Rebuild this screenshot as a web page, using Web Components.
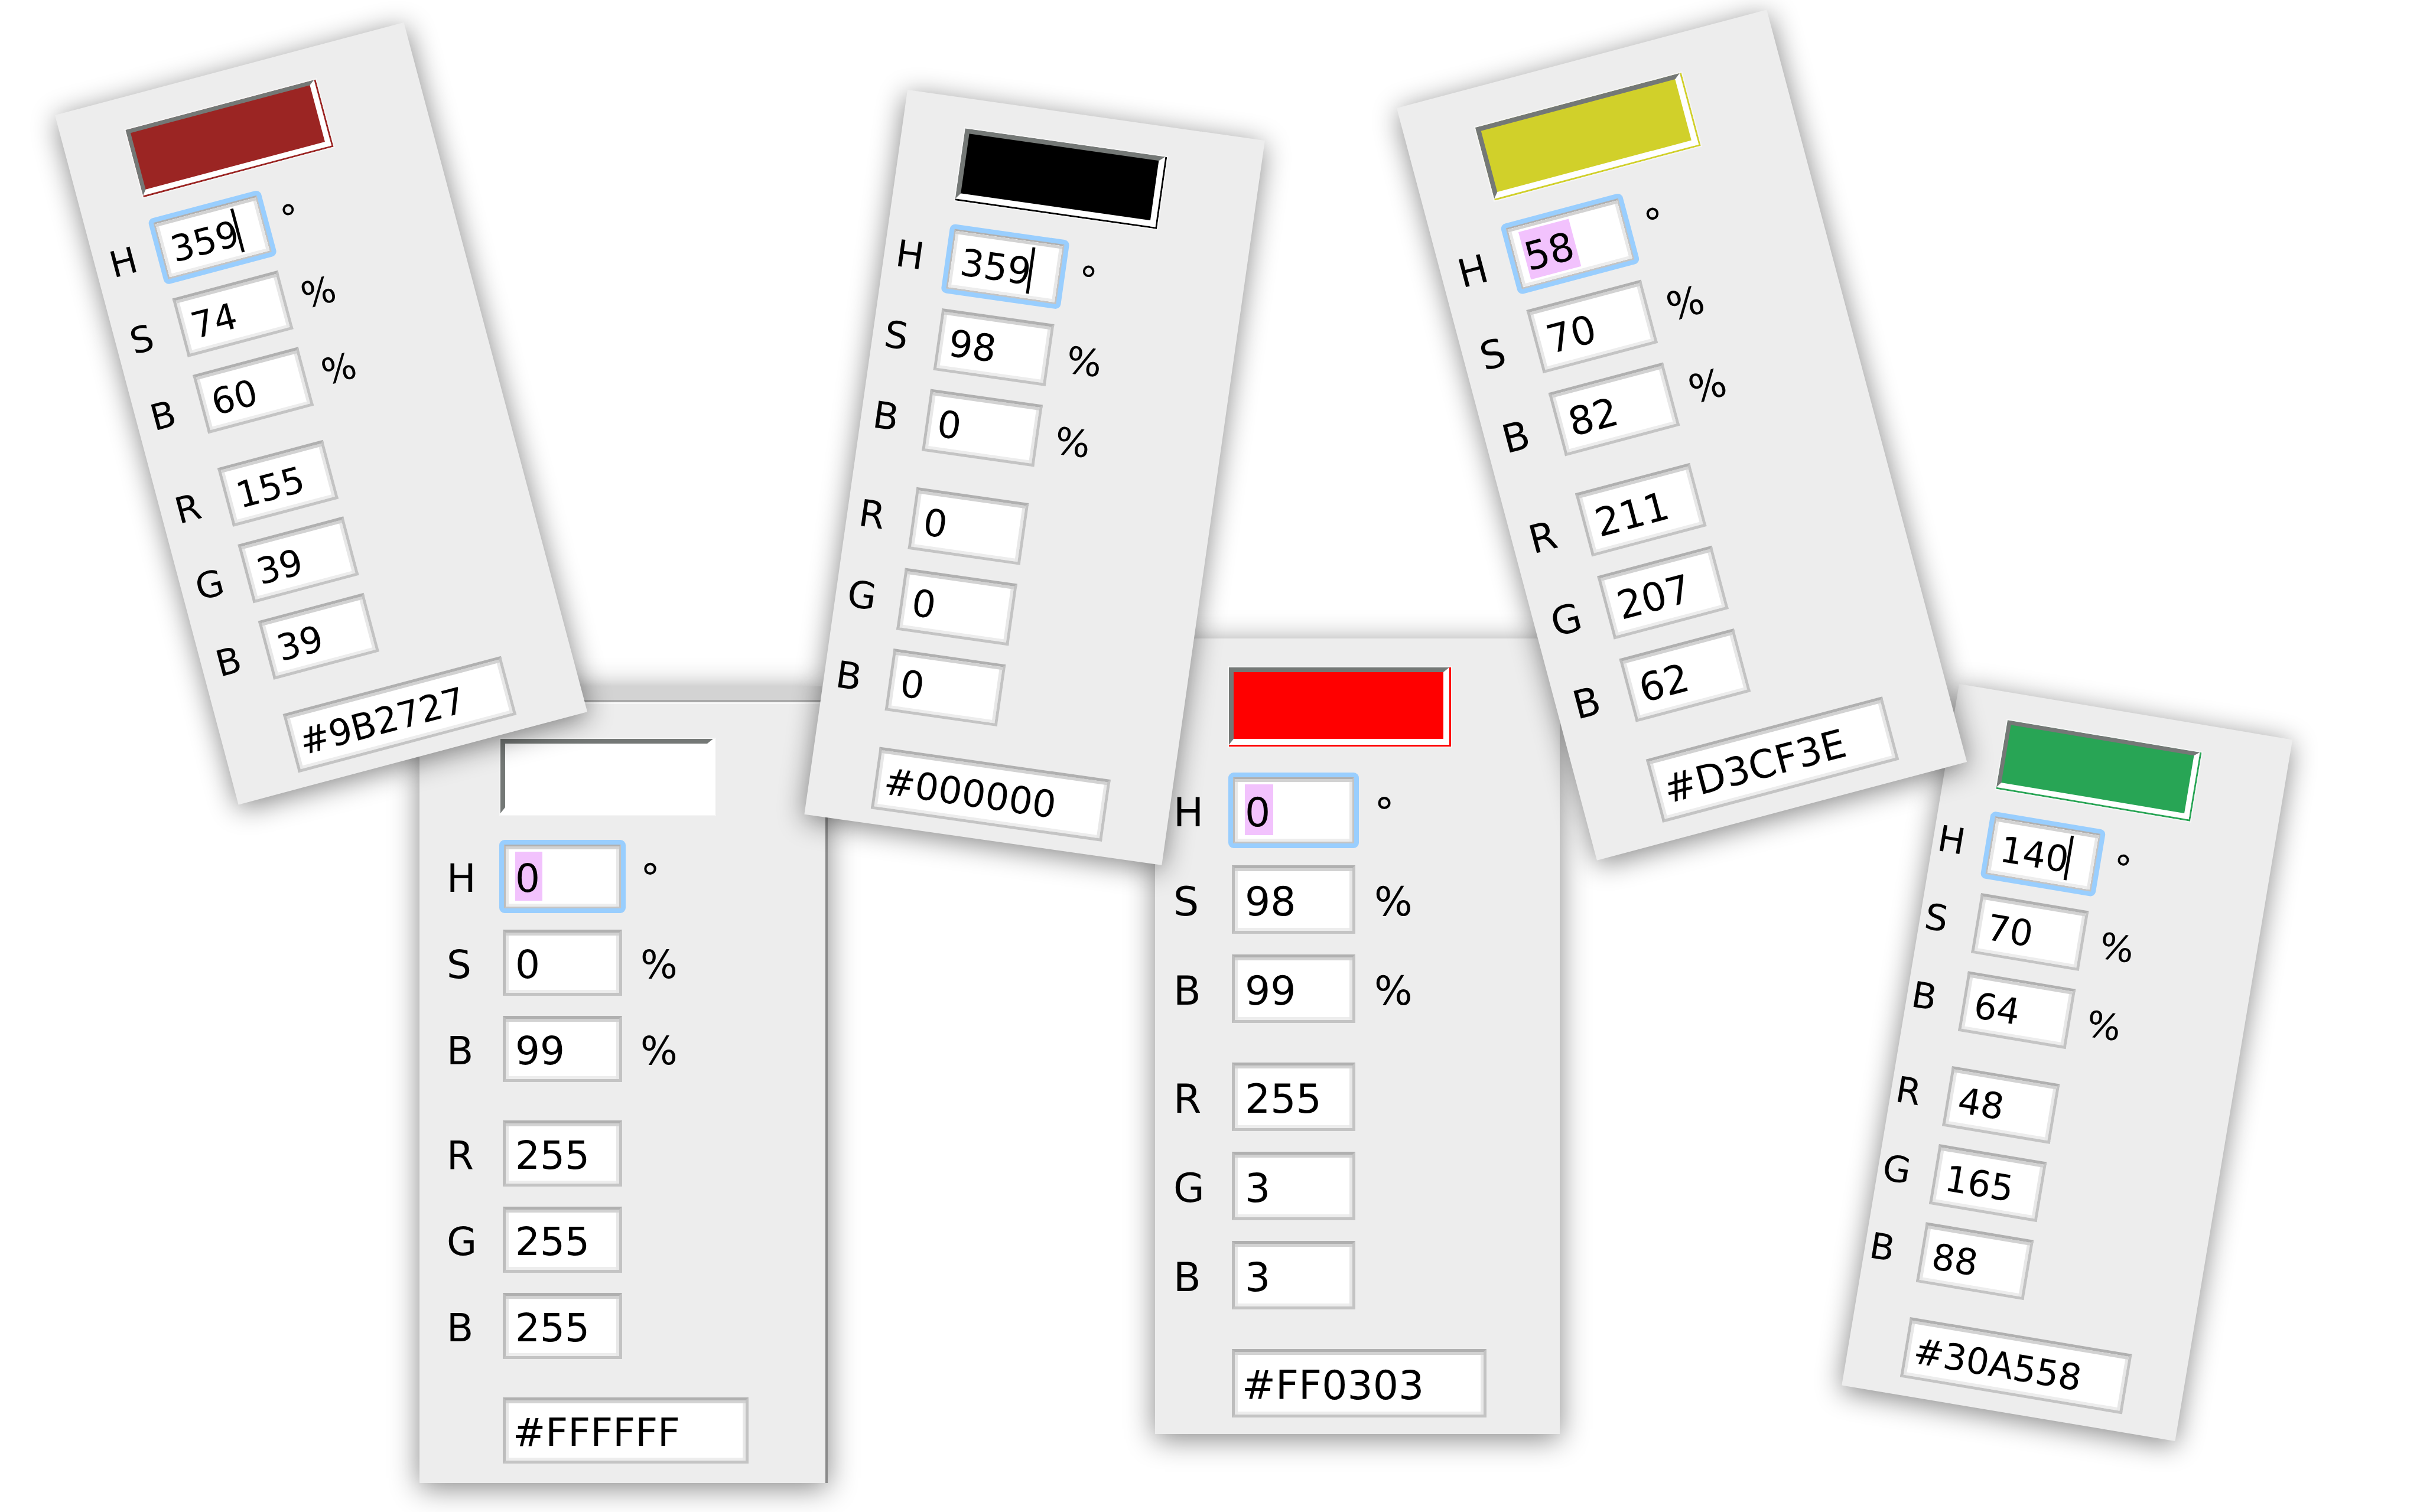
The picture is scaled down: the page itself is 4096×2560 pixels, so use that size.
<!DOCTYPE html>
<html lang="en">
<head>
<meta charset="utf-8">
<title>Color pickers</title>
<style>
  body { margin: 0; background: #fff; }
</style>
</head>
<body>
<color-board>
  <color-card style="left:710px; top:1162px" width="691" scale="1" pad="89 137 33" framed
    fill="#ffffff" hsb="0 0 99" rgb="255 255 255" hex="#FFFFFF" edit="select"></color-card>
  <color-card style="left:1955px; top:1081px" width="685" scale="1.037" pad="49 125 28"
    fill="#ff0000" hsb="0 98 99" rgb="255 3 3" hex="#FF0303" edit="select"></color-card>
  <color-card style="left:3316px; top:1158px; rotate:9.5deg" width="572" scale="0.917" pad="47 91 30"
    fill="#28a555" hsb="140 70 64" rgb="48 165 88" hex="#30A558" edit="caret"></color-card>
  <color-card style="left:93px; top:195px; rotate:-14.9deg" width="611" scale="0.918" pad="55 109 26"
    fill="#9b2523" hsb="359 74 60" rgb="155 39 39" hex="#9B2727" edit="caret"></color-card>
  <color-card style="left:1536px; top:152px; rotate:8.1deg" width="611" scale="0.95" pad="51 106 25"
    fill="#000000" hsb="359 98 0" rgb="0 0 0" hex="#000000" edit="caret"></color-card>
  <color-card style="left:2364px; top:183px; rotate:-14.9deg" width="648" scale="0.995" pad="66 120 33"
    fill="#d1d02a" hsb="58 70 82" rgb="211 207 62" hex="#D3CF3E" edit="select"></color-card>
</color-board>

<script>
class ColorBoard extends HTMLElement {
  connectedCallback() {
    this.attachShadow({ mode: 'open' }).innerHTML = `
      <style>
        :host { display: block; position: relative; min-height: 100vh; overflow: hidden; background: #fff; }
      </style>
      <slot></slot>`;
  }
}

class ColorSwatch extends HTMLElement {
  connectedCallback() {
    this.attachShadow({ mode: 'open' }).innerHTML = `
      <style>
        :host {
          display: block; box-sizing: border-box; width: var(--swatch-w); height: var(--swatch-h);
          border: 0 solid var(--fill); border-width: 0 3px 3px 0; outline: 2px solid #f5f5f5;
        }
        .bevel {
          box-sizing: border-box; height: 100%; background: var(--fill);
          border: solid; border-width: var(--bevel) var(--rim) var(--rim) var(--bevel);
          border-color: #747876 #fff #fff #747876;
        }
      </style>
      <div class="bevel"></div>`;
  }
}

class ColorField extends HTMLElement {
  connectedCallback() {
    const label = this.getAttribute('label') || '';
    const unit = this.getAttribute('unit') || '';
    const value = this.getAttribute('value');
    this.style.setProperty('--chars', value.length);
    this.attachShadow({ mode: 'open' }).innerHTML = `
      <style>
        :host { display: flex; height: var(--field-h); }
        label, span, input {
          box-sizing: border-box; height: var(--field-h); margin: 0; color: #000;
          font: var(--font) "Lucida Grande", "DejaVu Sans", sans-serif;
        }
        label, span { padding-top: var(--drop); line-height: var(--text-h); }
        label { width: var(--label-w); }
        span { padding-left: var(--unit-gap); }
        input {
          width: var(--field-w); padding: var(--drop) 0 0 var(--inset); border-radius: 0;
          border: var(--line) solid; border-color: #b0b0b0 #c3c3c3 #c4c4c4 #bdbdbd;
          background: #fff;
          box-shadow: inset 0 var(--line) #d2d2d2, inset var(--line) 0 #e8e8e8,
            inset calc(0px - var(--line)) 0 #e8e8e8, inset 0 calc(0px - var(--line)) #ededed;
        }
        :host([wide]) input { width: var(--hex-w); padding-left: var(--hex-inset); }
        :host([edit]) input { outline: 8px solid #99cefe; outline-offset: -2px; border-radius: 3px; }
        :host([edit=select]) input {
          background: linear-gradient(#f2c2fd, #f2c2fd) var(--inset) var(--mark-y) /
            calc(var(--digit) * var(--chars) + 4px) var(--mark-h) no-repeat #fff;
        }
        :host([edit=caret]) input {
          background: linear-gradient(#000, #000) calc(var(--inset) + var(--digit) * var(--chars) - 3px) var(--mark-y) /
            5px var(--mark-h) no-repeat #fff;
        }
      </style>
      <label for="value">${label}</label>
      <input id="value" type="text" value="${value}" ${label ? '' : 'aria-label="Hex"'}>
      ${unit ? `<span>${unit}</span>` : ''}`;
  }
}

class ColorCard extends HTMLElement {
  connectedCallback() {
    const attr = name => this.getAttribute(name);
    const scale = Number(attr('scale'));
    const [top, left, bottom] = attr('pad').split(' ').map(Number);
    const sizes = {
      'swatch-w': 363, 'swatch-h': 129, bevel: 8, rim: 10, font: 66, digit: 42,
      'field-h': 112, 'field-w': 202, 'hex-w': 416, 'label-w': 95, 'swatch-x': 91,
      'unit-gap': 31, line: 5, inset: 16, 'hex-inset': 12, drop: 7, 'text-h': 105,
      'mark-y': 9, 'mark-h': 83, gap: 34, 'swatch-gap': 48, 'group-gap': 65
    };
    for (const [name, n] of Object.entries(sizes)) {
      this.style.setProperty('--' + name, Math.round(n * scale) + 'px');
    }
    this.style.setProperty('--fill', attr('fill'));
    this.style.width = attr('width') + 'px';
    this.style.padding = `${top}px 0 ${bottom}px ${left - Math.round(sizes['swatch-x'] * scale)}px`;
    const [h, s, b] = attr('hsb').split(' ');
    const [r, g, bl] = attr('rgb').split(' ');
    this.attachShadow({ mode: 'open' }).innerHTML = `
      <style>
        :host {
          display: flex; flex-direction: column; gap: var(--group-gap); box-sizing: border-box;
          position: absolute; transform-origin: 0 0; background: #ededed;
          box-shadow: 0 8px 46px rgba(0, 0, 0, .48);
        }
        :host([framed]) {
          border: solid #8a8a8a; border-width: 0 4px 0 0;
          background: linear-gradient(#d3d3d3 23px, #a9a9a9 23px 27px, #f8f8f8 27px 30px, #ededed 30px);
        }
        .group { display: flex; flex-direction: column; gap: var(--gap); }
        color-swatch { margin: 0 0 calc(var(--swatch-gap) - var(--gap)) var(--swatch-x); }
      </style>
      <div class="group">
        <color-swatch></color-swatch>
        <color-field label="H" unit="°" value="${h}" edit="${attr('edit')}"></color-field>
        <color-field label="S" unit="%" value="${s}"></color-field>
        <color-field label="B" unit="%" value="${b}"></color-field>
      </div>
      <div class="group">
        <color-field label="R" value="${r}"></color-field>
        <color-field label="G" value="${g}"></color-field>
        <color-field label="B" value="${bl}"></color-field>
      </div>
      <color-field wide value="${attr('hex')}"></color-field>`;
  }
}

customElements.define('color-board', ColorBoard);
customElements.define('color-swatch', ColorSwatch);
customElements.define('color-field', ColorField);
customElements.define('color-card', ColorCard);
</script>
</body>
</html>
